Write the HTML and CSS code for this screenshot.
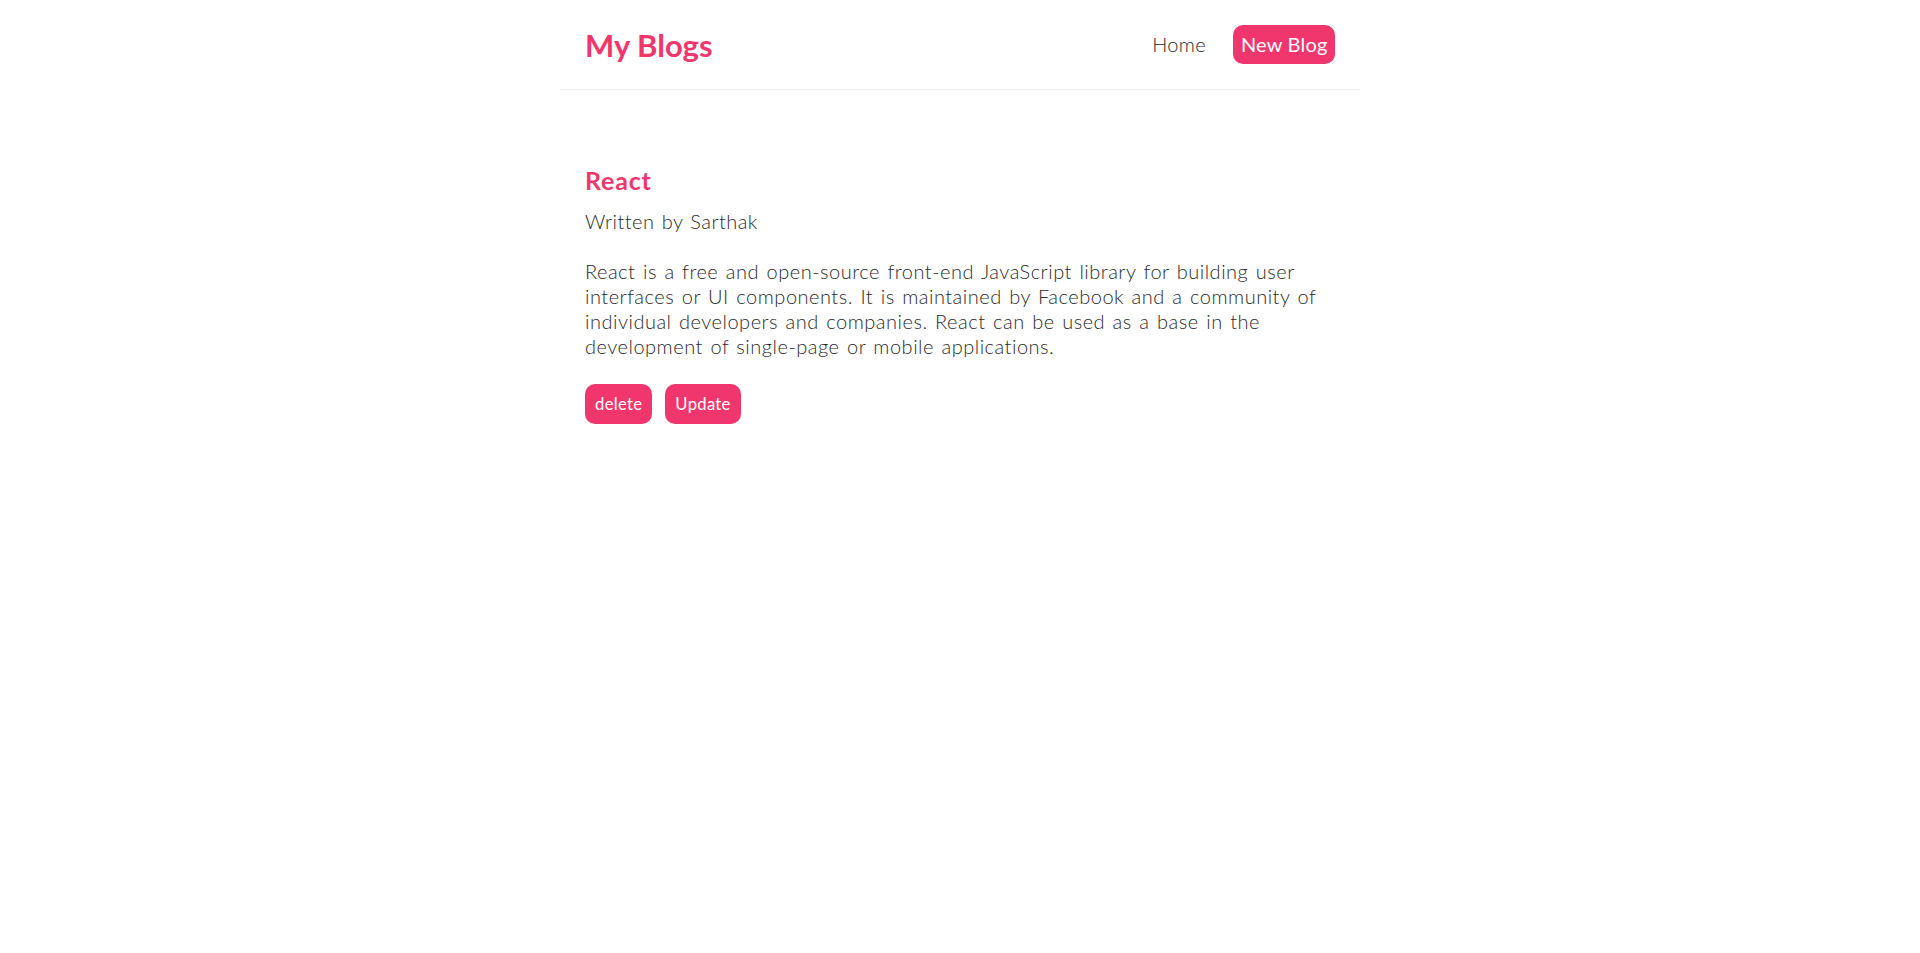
FILE: index.html
```html
<!DOCTYPE html>
<html lang="en">
<head>
<meta charset="utf-8">
<title>My Blogs</title>
<link rel="stylesheet" href="styles.css">
</head>
<body>
<div class="app">
  <nav class="navbar">
    <h1 class="brand">My Blogs</h1>
    <div class="links">
      <a class="link" href="#">Home</a>
      <a class="link link-new" href="#">New Blog</a>
    </div>
  </nav>
  <main class="content">
    <article class="blog-details">
      <h2 class="blog-title">React</h2>
      <p class="blog-author">Written by Sarthak</p>
      <div class="blog-body">React is a free and open-source front-end JavaScript library for building user interfaces or UI components. It is maintained by Facebook and a community of individual developers and companies. React can be used as a base in the development of single-page or mobile applications.</div>
      <div class="actions">
        <button class="btn">delete</button>
        <button class="btn">Update</button>
      </div>
    </article>
  </main>
</div>
</body>
</html>
```

FILE: styles.css
```css
* {
  margin: 0;
  box-sizing: content-box;
  font-family: "Lato", "Noto Sans", sans-serif;
  color: #333;
}

body {
  background: #fff;
  font-size: 20px;
}

.navbar {
  max-width: 750px;
  margin: 0 auto;
  padding: 25px;
  display: flex;
  align-items: center;
  border-bottom: 1px solid #f2f2f2;
}

.brand {
  font-size: 31px;
  line-height: 38px;
  font-weight: 700;
  color: #f1356d;
}

.links {
  margin-left: auto;
  display: flex;
  align-items: center;
}

.link {
  margin-left: 20px;
  padding: 7px 7.5px;
  font-size: 20px;
  line-height: 25px;
  font-weight: 300;
  letter-spacing: 0.3px;
  text-decoration: none;
  color: #2b2b2b;
}

.link-new {
  color: #fff;
  background: #f1356d;
  border-radius: 10px;
  font-weight: 400;
  letter-spacing: 0.2px;
}

.content {
  max-width: 750px;
  margin: 50px auto;
  padding: 25px;
}

.blog-title {
  font-size: 25px;
  line-height: 31px;
  font-weight: 700;
  letter-spacing: 0.8px;
  color: #f1356d;
  margin-bottom: 12.5px;
}

.blog-author {
  font-size: 20px;
  line-height: 25px;
  font-weight: 300;
  color: #2b2b2b;
  letter-spacing: 0.45px;
  word-spacing: 1.5px;
}

.blog-body {
  margin: 25px 0;
  font-size: 20px;
  line-height: 25px;
  font-weight: 300;
  color: #2b2b2b;
  letter-spacing: 0.5px;
  word-spacing: 1.6px;
}

.actions {
  display: flex;
  gap: 13px;
}

.btn {
  background: #f1356d;
  color: #fff;
  border: 0;
  padding: 10px;
  border-radius: 10px;
  font-size: 16.67px;
  line-height: 20px;
  letter-spacing: 0.3px;
  cursor: pointer;
}
```
